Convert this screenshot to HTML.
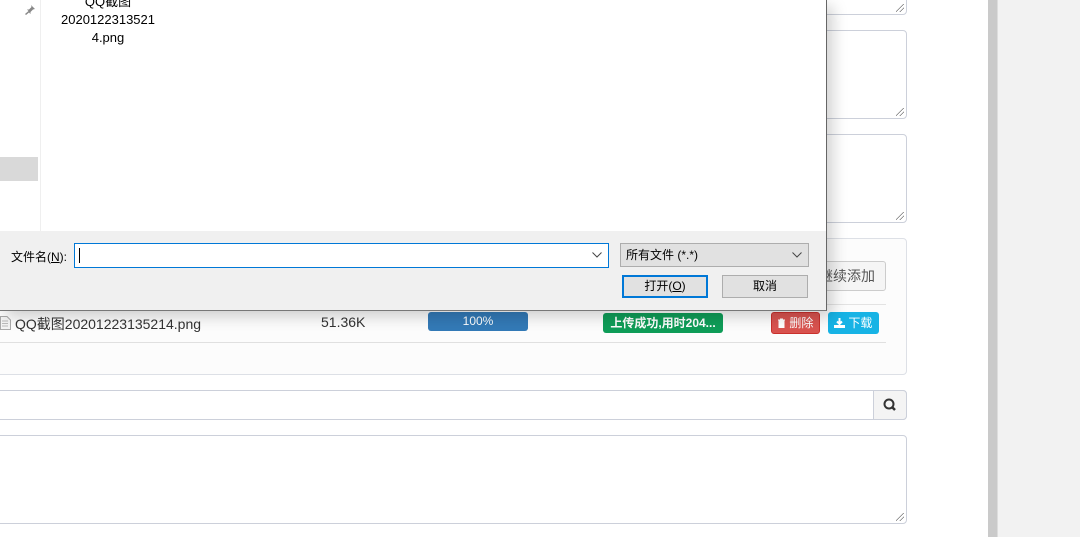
<!DOCTYPE html>
<html><head><meta charset="utf-8"><style>
*{box-sizing:border-box;margin:0;padding:0}
body{width:1080px;height:537px;overflow:hidden;background:#fff;position:relative;font-family:"Liberation Sans","Noto Sans CJK SC",sans-serif;font-size:13px;color:#333}
.a{position:absolute}
.ta{border:1px solid #ccd0da;border-radius:4px;background:#fff}
.grip{position:absolute;right:2px;bottom:2px;width:8px;height:8px;background:linear-gradient(135deg,transparent 45%,#777 45%,#777 52%,transparent 52%,transparent 70%,#777 70%,#777 77%,transparent 77%)}
.btn{position:absolute;border:1px solid #adadad;background:#e1e1e1;font-size:12px;text-align:center;color:#000}
.chev{position:absolute;right:6px;top:8px}
</style></head><body>
<div class="a" style="left:988px;top:0;width:9px;height:537px;background:#cacaca"></div>
<div class="a" style="left:997px;top:0;width:83px;height:537px;background:#f2f2f2;border-left:1px solid #ddd"></div>

<div class="a ta" style="left:-10px;top:-10px;width:917px;height:25px"><div class="grip"></div></div>
<div class="a ta" style="left:-10px;top:30px;width:917px;height:89px"><div class="grip"></div></div>
<div class="a ta" style="left:-10px;top:134px;width:917px;height:89px"><div class="grip"></div></div>

<div class="a" style="left:-10px;top:238px;width:917px;height:137px;border:1px solid #dde0e6;border-radius:4px;background:#fcfcfc"></div>
<div class="a" style="left:814px;top:261px;width:72px;height:30px;border:1px solid #ccc;border-radius:3px;background:#f5f5f5;color:#555;font-size:14px;line-height:28px;text-align:right;padding-right:10px">继续添加</div>
<div class="a" style="left:0;top:304px;width:886px;height:1px;background:#e3e3e3"></div>
<div class="a" style="left:0;top:342px;width:886px;height:1px;background:#e0e0e0"></div>
<svg class="a" style="left:0;top:316px" width="11" height="14"><path d="M0.5 0.5H7L10.5 4V13.5H0.5Z" fill="#f4f4f4" stroke="#aaa"/><path d="M2 5h6M2 7.5h6M2 10h6" stroke="#bbb"/></svg>
<div class="a" style="left:15px;top:314px;font-size:14px;color:#333">QQ截图20201223135214.png</div>
<div class="a" style="left:321px;top:314px;font-size:14px;color:#333">51.36K</div>
<div class="a" style="left:428px;top:312px;width:100px;height:19px;background:#337ab7;border-radius:3px;color:#fff;font-size:12px;text-align:center;line-height:19px">100%</div>
<div class="a" style="left:603px;top:313px;width:120px;height:20px;background:#0f9d58;border-radius:3px;color:#fff;font-size:12px;font-weight:bold;text-align:center;line-height:20px">上传成功,用时204...</div>
<div class="a" style="left:771px;top:312px;width:49px;height:22px;background:#d9534f;border:1px solid #c9302c;border-radius:3px;color:#fff;font-size:12px;line-height:20px;padding-left:5px"><svg width="9" height="10" style="vertical-align:-1px"><path d="M1 2h7M3 1h3M2 3h5v6.5h-5z" fill="#fff" stroke="#fff"/></svg> 删除</div>
<div class="a" style="left:828px;top:312px;width:51px;height:22px;background:#17b3e5;border-radius:3px;color:#fff;font-size:12px;line-height:22px;padding-left:6px"><svg width="11" height="10" style="vertical-align:-1px"><path d="M5.5 0v5M3 3.5l2.5 2.5 2.5-2.5" stroke="#fff" stroke-width="2" fill="none"/><path d="M0 7h11v3H0z" fill="#fff"/></svg> 下载</div>

<div class="a" style="left:-10px;top:390px;width:917px;height:30px;border:1px solid #ccd0da;border-radius:4px"></div>
<div class="a" style="left:873px;top:390px;width:34px;height:30px;border:1px solid #ccd0da;border-radius:0 4px 4px 0;background:#f4f4f4">
<svg width="34" height="30" style="position:absolute;left:-1px;top:-1px"><circle cx="16" cy="14" r="4.5" fill="none" stroke="#333" stroke-width="2"/><line x1="19.5" y1="17.5" x2="22" y2="20" stroke="#333" stroke-width="2.5"/></svg></div>
<div class="a ta" style="left:-10px;top:435px;width:917px;height:89px"><div class="grip"></div></div>

<!-- dialog -->
<div class="a" style="left:0;top:0;width:827px;height:311px;background:#fff;border-right:1px solid #666;border-bottom:1px solid #777;box-shadow:6px 6px 14px rgba(0,0,0,.18)">
<div class="a" style="left:40px;top:0;width:1px;height:231px;background:#efefef"></div>
<div class="a" style="left:0;top:157px;width:38px;height:24px;background:#d9d9d9"></div>
<svg class="a" style="left:24px;top:3px" width="12" height="12"><path d="M6 1l5 5-2 0.5-2.5 2.5 0 2-1.5-1.5L2 12 1 11l3.5-3L3 6.5h2L7.5 4 7 2z" fill="#888"/></svg>
<div class="a" style="left:40px;top:-7px;width:136px;text-align:center;font-size:13px;line-height:18px;color:#000">QQ截图<br>2020122313521<br>4.png</div>
<div class="a" style="left:0;top:231px;width:826px;height:79px;background:#f0f0f0">
<div class="a" style="left:11px;top:17px;font-size:12px;color:#000">文件名(<u>N</u>):</div>
<div class="a" style="left:74px;top:12px;width:535px;height:25px;border:1px solid #0078d7;background:#fff">
<div class="a" style="left:4px;top:4px;width:1px;height:15px;background:#000"></div>
<svg class="chev" width="10" height="6"><path d="M0.5 0.5l4.5 4.5 4.5-4.5" stroke="#444" fill="none"/></svg></div>
<div class="btn" style="left:620px;top:12px;width:189px;height:24px;text-align:left;padding-left:5px;line-height:22px">所有文件 (*.*)<svg class="chev" width="10" height="6"><path d="M0.5 0.5l4.5 4.5 4.5-4.5" stroke="#444" fill="none"/></svg></div>
<div class="btn" style="left:622px;top:44px;width:86px;height:23px;border:2px solid #0078d7;line-height:19px">打开(<u>O</u>)</div>
<div class="btn" style="left:722px;top:44px;width:86px;height:23px;line-height:21px">取消</div>
</div></div>
</body></html>
